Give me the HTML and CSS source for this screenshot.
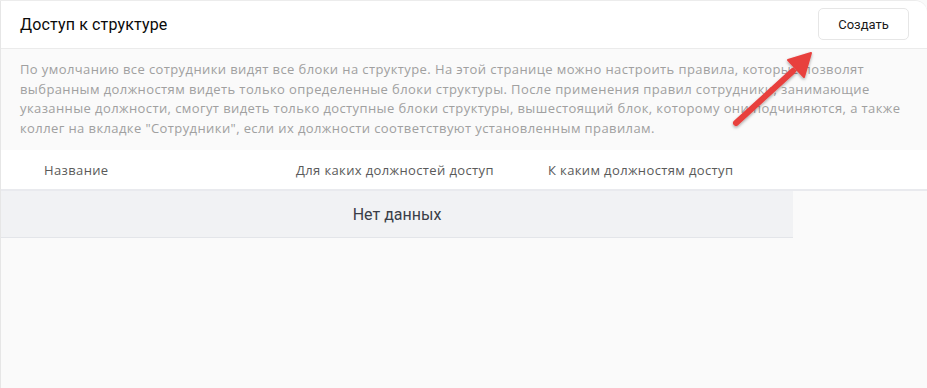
FILE: index.html
```html
<!DOCTYPE html>
<html lang="ru">
<head>
<meta charset="utf-8">
<link rel="stylesheet" href="styles.css">
</head>
<body>
<div class="card">
  <header class="head">
    <h1 class="title">Доступ к структуре</h1>
    <button class="btn">Создать</button>
  </header>
  <p class="desc">По умолчанию все сотрудники видят все блоки на структуре. На этой странице можно настроить правила, которые позволят выбранным должностям видеть только определенные блоки структуры. После применения правил сотрудники, занимающие указанные должности, смогут видеть только доступные блоки структуры, вышестоящий блок, которому они подчиняются, а также коллег на вкладке "Сотрудники", если их должности соответствуют установленным правилам.</p>
  <div class="thead">
    <div class="th">Название</div>
    <div class="th">Для каких должностей доступ</div>
    <div class="th">К каким должностям доступ</div>
  </div>
  <div class="empty">Нет данных</div>
  <svg class="arrow" width="100" height="90" viewBox="0 0 100 90">
    <defs>
      <filter id="sh" x="-30%" y="-30%" width="160%" height="160%">
        <feDropShadow dx="0" dy="1.5" stdDeviation="1.5" flood-color="#000" flood-opacity="0.35"/>
      </filter>
    </defs>
    <g filter="url(#sh)" fill="#e8403e" stroke="#e8403e">
      <line x1="15" y1="73" x2="72" y2="21" stroke-width="6" stroke-linecap="round"/>
      <polygon points="90,3 67,10 83,27" stroke-width="2" stroke-linejoin="round"/>
    </g>
  </svg>
</div>
</body>
</html>
```

FILE: styles.css
```css
* { box-sizing: border-box; }
html, body { margin: 0; padding: 0; }
body { width: 927px; height: 388px; overflow: hidden; background: #fafafa; font-family: "Roboto", "Liberation Sans", sans-serif; }
.card {
  position: relative;
  height: 388px;
  border-left: 1px solid #e6e6e6;
  border-top: 1px solid #ececec;
  border-top-right-radius: 12px;
  background: #fafafa;
}
.head {
  height: 48px;
  background: #fff;
  border-bottom: 1px solid #ebebeb;
  border-top-right-radius: 12px;
  display: flex;
  align-items: center;
  justify-content: space-between;
  padding: 0 18px 0 19px;
}
.title { margin: 0; font-size: 16px; font-weight: 400; color: #0a0a0a; letter-spacing: 0.15px; }
.btn {
  width: 91px; height: 32px; margin-top: -1px;
  background: #fff; border: 1px solid #e6e6e6; border-radius: 5px;
  font-family: "Roboto", "Liberation Sans", sans-serif; font-size: 13px; color: #1a1a1a;
}
.desc {
  margin: 0;
  padding: 11px 20px 11px 19px;
  font-family: "Open Sans", sans-serif;
  font-size: 13px; line-height: 19.5px; color: #a0a0a0;
  letter-spacing: 0.4px;
  height: 101px;
}
.thead {
  display: grid;
  grid-template-columns: 252px 252px 252px;
  padding-left: 19px;
  height: 41px;
  align-items: center;
  background: #fff;
  border-bottom: 2px solid #e9eaee;
}
.th { padding-left: 24px; font-family: "Open Sans", sans-serif; font-size: 13px; color: #5a5a5a; letter-spacing: 0.37px; }
.empty {
  width: 792px;
  height: 47px;
  display: flex; align-items: center; justify-content: center;
  background: #f1f2f4;
  border-bottom: 1px solid #e3e5e9;
  font-size: 16px; color: #3a3e48;
}
.arrow { position: absolute; left: 720px; top: 49px; }
```
